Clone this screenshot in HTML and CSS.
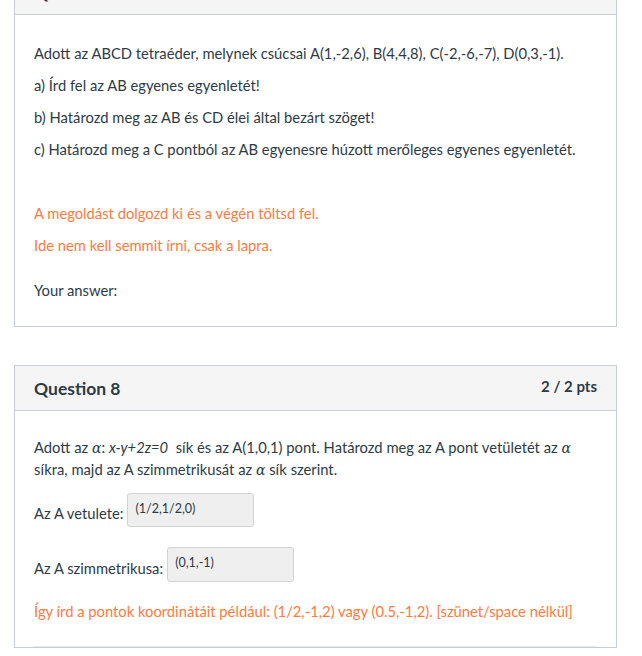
FILE: index.html
```html
<!DOCTYPE html>
<html lang="hu">
<head>
<meta charset="utf-8">
<title>Quiz</title>
<link rel="stylesheet" href="styles.css">
</head>
<body>
<div class="page">
  <div class="question q7">
    <div class="header">
      <span class="name">Question 7</span>
      <span class="pts">0 / 3 pts</span>
    </div>
    <div class="text">
      <p>Adott az ABCD tetraéder, melynek csúcsai A(1,-2,6), B(4,4,8), C(-2,-6,-7), D(0,3,-1).</p>
      <p>a) Írd fel az AB egyenes egyenletét!</p>
      <p>b) Határozd meg az AB és CD élei által bezárt szöget!</p>
      <p>c) Határozd meg a C pontból az AB egyenesre húzott merőleges egyenes egyenletét.</p>
      <p>&nbsp;</p>
      <p class="note">A megoldást dolgozd ki és a végén töltsd fel.</p>
      <p class="note">Ide nem kell semmit írni, csak a lapra.</p>
    </div>
    <div class="answer">Your answer:</div>
  </div>

  <div class="question q8">
    <div class="header">
      <span class="name">Question 8</span>
      <span class="pts">2 / 2 pts</span>
    </div>
    <div class="text">
      <p class="intro">Adott az <span class="math">α</span>: <span class="eq">x-y+2z=0</span>&nbsp; sík és az A(1,0,1) pont. Határozd meg az A pont vetületét az <span class="math">α</span> síkra, majd az A szimmetrikusát az <span class="math">α</span> sík szerint.</p>
      <div class="row row1">
        <span class="label">Az A vetulete:</span>
        <span class="field">(1/2,1/2,0)</span>
      </div>
      <div class="row row2">
        <span class="label">Az A szimmetrikusa:</span>
        <span class="field">(0,1,-1)</span>
      </div>
      <p class="note hint">Így írd a pontok koordinátáit például: (1/2,-1,2) vagy (0.5,-1,2). [szünet/space nélkül]</p>
      <div class="rule"></div>
    </div>
  </div>
</div>
</body>
</html>
```

FILE: styles.css
```css
html, body {
  margin: 0;
  padding: 0;
  background: #ffffff;
}

body {
  font-family: Lato, "Open Sans", "Liberation Sans", sans-serif;
  color: #2d3b45;
  font-size: 14.75px;
  line-height: 20px;
  overflow: hidden;
}

.page {
  padding: 0 25px 0 14px;
}

.question {
  border: 1px solid #c7cdd1;
  background: #fff;
}

.q7 {
  margin-top: -31px;
}

.q8 {
  margin-top: 38px;
}

.header {
  display: flex;
  justify-content: space-between;
  align-items: flex-start;
  background: #f5f5f5;
  border-bottom: 1px solid #c7cdd1;
  height: 45px;
  box-sizing: border-box;
  padding: 0 19px 0 19px;
}

.name {
  font-weight: 700;
  font-size: 17.5px;
  line-height: 24px;
  margin-top: 11px;
}

.pts {
  font-weight: 700;
  font-size: 15px;
  line-height: 20px;
  margin-top: 10px;
}

.q7 .pts {
  visibility: hidden;
}

.text {
  padding: 16px 19px 0 19px;
}

.text p {
  margin: 12px 0;
}

.q8 .text {
  padding-top: 14px;
}

.note {
  color: #ff7a40;
}

.answer {
  padding: 13px 19px 26px 19px;
}

.intro {
  line-height: 21px;
}

.math {
  font-family: "DejaVu Serif", "Liberation Serif", serif;
  font-style: italic;
  font-size: 14px;
}

.eq {
  font-style: italic;
}

.row {
  display: flex;
  align-items: flex-end;
  gap: 4px;
}

.row1 {
  margin-top: 12px;
}

.row2 {
  margin-top: 20px;
}

.label {
  margin-bottom: 4px;
}

.field {
  display: block;
  box-sizing: border-box;
  width: 127px;
  height: 34px;
  padding: 7px 7px;
  font-size: 12.5px;
  line-height: 16px;
  background: #efefef;
  border: 1px solid #d3d3d3;
  border-radius: 3px;
}

.row2 .field {
  height: 35px;
}

.hint {
  margin-top: 19px !important;
  margin-bottom: 0 !important;
}

.rule {
  margin-top: 25px;
  height: 1px;
  background: #e8e8e8;
}
```
